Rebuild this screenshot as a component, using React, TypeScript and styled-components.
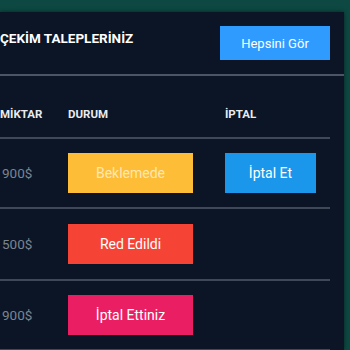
import React from "react";
import styled, { createGlobalStyle } from "styled-components";

const Global = createGlobalStyle`
  html, body { margin: 0; padding: 0; background: #0d4842; height: 100%; overflow: hidden; }
  body { font-family: Roboto, "Liberation Sans", sans-serif; }
  #root { height: 100%; }
`;

const Page = styled.div`
  height: 100%;
  padding: 12px 6px 0 0;
  box-sizing: border-box;
`;

const Panel = styled.div`
  background: #0b1525;
  height: 100%;
  box-shadow: 0 0 4px rgba(0, 0, 0, 0.5);
`;

const Header = styled.div`
  height: 64px;
  display: flex;
  align-items: center;
  justify-content: space-between;
  padding-right: 14px;
  border-bottom: 2px solid #4b5563;
  box-sizing: border-box;
`;

const Title = styled.h2`
  margin: 0;
  padding-bottom: 11px;
  color: #ffffff;
  font-size: 13.5px;
  font-weight: 700;
`;

const AllButton = styled.button`
  width: 110px;
  height: 34px;
  border: none;
  background: #2f9bff;
  color: #ffffff;
  font-family: Roboto, "Liberation Sans", sans-serif;
  font-size: 13px;
  padding: 0;
`;

const Table = styled.div`
  width: 330px;
`;

const Row = styled.div<{ $head?: boolean; $h: number }>`
  display: grid;
  grid-template-columns: 68px 157px 105px;
  align-items: center;
  height: ${(p) => p.$h}px;
  border-bottom: 2px solid #3f4856;
  box-sizing: border-box;
  ${(p) => (p.$head ? "padding-top: 14px;" : "")}
`;

const HeadCell = styled.div`
  color: #e8ecf1;
  font-size: 11.5px;
  font-weight: 700;
`;

const Amount = styled.div`
  color: #7b8492;
  font-size: 13.5px;
  padding-left: 2px;
`;

const Status = styled.div<{ $bg: string; $fg: string; $w: number }>`
  width: ${(p) => p.$w}px;
  height: 40px;
  display: flex;
  align-items: center;
  justify-content: center;
  background: ${(p) => p.$bg};
  color: ${(p) => p.$fg};
  font-size: 14px;
`;

const rows = [
  { amount: "900$", label: "Beklemede", bg: "#fdbd36", fg: "#fde7b3", cancel: true, h: 70 },
  { amount: "500$", label: "Red Edildi", bg: "#f54336", fg: "#ffffff", cancel: false, h: 72 },
  { amount: "900$", label: "İptal Ettiniz", bg: "#e91e63", fg: "#ffffff", cancel: false, h: 70 },
];

export default function App() {
  return (
    <>
      <Global />
      <Page>
        <Panel>
          <Header>
            <Title>ÇEKİM TALEPLERİNİZ</Title>
            <AllButton>Hepsini Gör</AllButton>
          </Header>
          <Table>
            <Row $head $h={63}>
              <HeadCell>MİKTAR</HeadCell>
              <HeadCell>DURUM</HeadCell>
              <HeadCell>İPTAL</HeadCell>
            </Row>
            {rows.map((r, i) => (
              <Row key={i} $h={r.h}>
                <Amount>{r.amount}</Amount>
                <Status $bg={r.bg} $fg={r.fg} $w={125}>
                  {r.label}
                </Status>
                <div>
                  {r.cancel && (
                    <Status $bg="#1a96ea" $fg="#ffffff" $w={91}>
                      İptal Et
                    </Status>
                  )}
                </div>
              </Row>
            ))}
          </Table>
        </Panel>
      </Page>
    </>
  );
}
